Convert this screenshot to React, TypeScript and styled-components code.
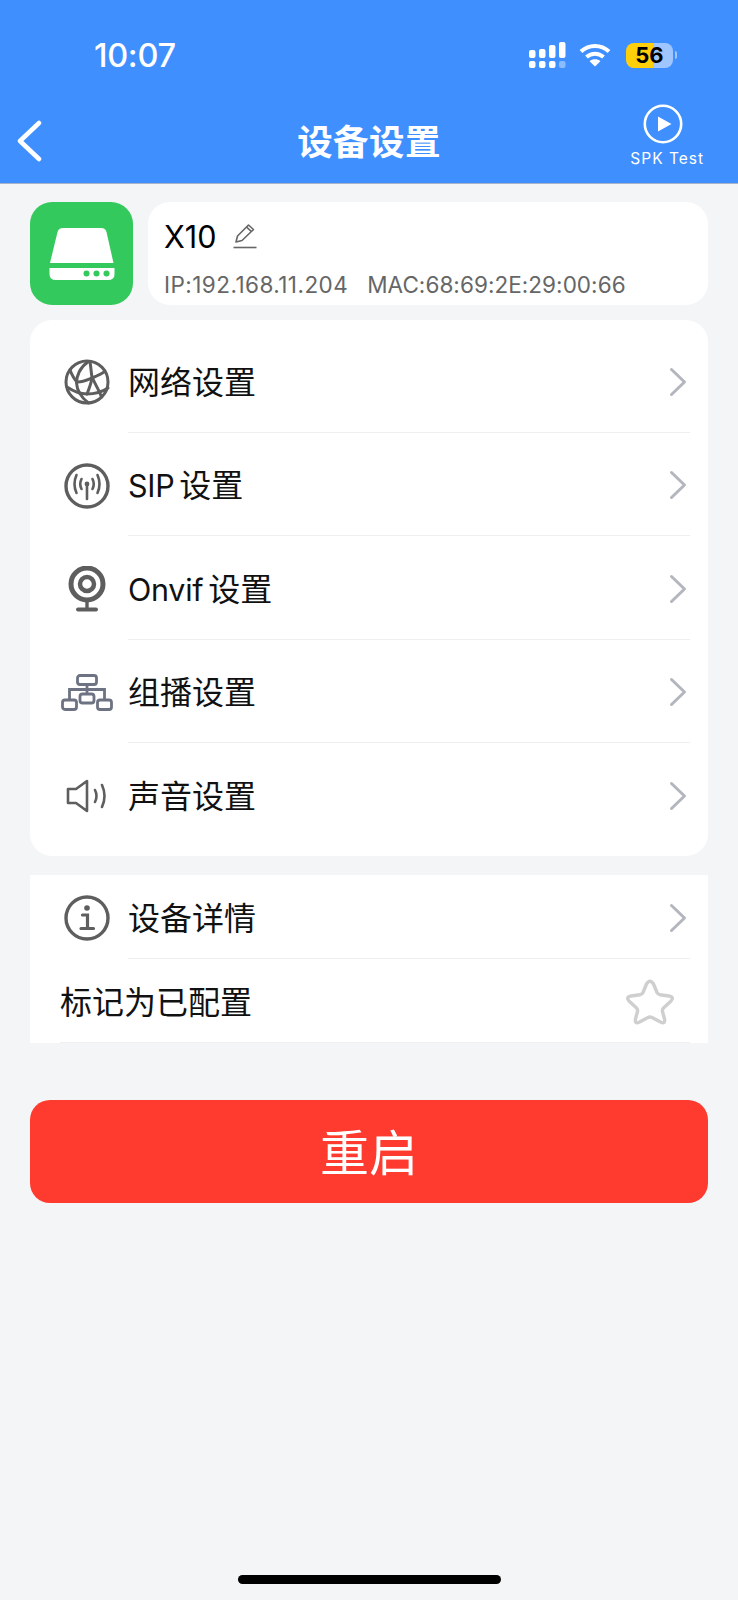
import styled, { createGlobalStyle } from 'styled-components';

const GlobalStyle = createGlobalStyle`
  html, body {
    margin: 0;
    padding: 0;
    background: #f4f5f7;
  }

  body {
    font-family: Inter, "Noto Sans CJK SC", sans-serif;
    color: #111;
  }
`;

const Page = styled.div`
  position: relative;
  width: 738px;
  height: 1600px;
  overflow: hidden;
  background: #f4f5f7;
`;

const Header = styled.header`
  background: #3f8fff;
  border-bottom: 1px solid #a9b4c6;
  color: #fff;
`;

const StatusBar = styled.div`
  display: flex;
  align-items: center;
  justify-content: space-between;
  height: 103px;
  padding: 7px 61px 0 94px;
  box-sizing: border-box;
`;

const Time = styled.span`
  font-size: 32.5px;
  font-weight: 500;
  letter-spacing: -0.3px;
`;

const StatusIcons = styled.div`
  display: flex;
  align-items: center;
  gap: 13px;
`;

const Battery = styled.div`
  display: flex;
  align-items: center;
  justify-content: center;
  width: 47px;
  height: 25px;
  margin-left: 2px;
  border-radius: 8px;
  background: linear-gradient(90deg, #ffd00a 57%, #a0c6ff 57%);
  color: #000;
  font-size: 22px;
  font-weight: 700;
`;

const BatteryNub = styled.i`
  display: block;
  width: 2px;
  height: 8px;
  margin-left: -11px;
  border-radius: 0 2px 2px 0;
  background: #a0c6ff;
`;

const NavBar = styled.div`
  display: grid;
  grid-template-columns: 1fr auto 1fr;
  height: 80px;
  padding: 0 16px;
`;

const BackButton = styled.div`
  display: flex;
  align-items: center;
  padding-bottom: 4px;
`;

const Title = styled.h1`
  margin: 0;
  align-self: center;
  padding: 0 0 7px;
  font-size: 35.5px;
  font-weight: 700;
  letter-spacing: 0.4px;
`;

const TestAction = styled.div`
  display: flex;
  flex-direction: column;
  align-items: center;
  justify-self: end;
  gap: 6px;
  margin-right: 18px;
  padding-top: 1px;
  font-size: 15.5px;
  letter-spacing: 1px;
  line-height: 18px;

  svg {
    margin-right: 8px;
  }
`;

const Content = styled.main`
  display: flex;
  flex-direction: column;
  padding: 18px 30px 0;
`;

const DeviceRow = styled.section`
  display: flex;
  gap: 15px;
  height: 103px;
`;

const DeviceBadge = styled.div`
  display: flex;
  flex: 0 0 103px;
  border-radius: 22px;
  background: #34c95c;
`;

const DeviceCard = styled.div`
  flex: 1;
  display: flex;
  flex-direction: column;
  padding: 16px 16px 0;
  border-radius: 22px;
  background: #fff;
`;

const DeviceName = styled.div`
  display: flex;
  align-items: center;
  gap: 17px;
  height: 36px;
  font-size: 30.5px;
  color: #000;
`;

const DeviceMeta = styled.div`
  display: flex;
  gap: 19px;
  margin-top: 17px;
  font-size: 22.5px;
  line-height: 28px;
  color: #666;
`;

const MetaItem = styled.span<{ $tracking?: number }>`
  letter-spacing: ${(p) => p.$tracking ?? 0}px;
`;

const Card = styled.section<{ $flat?: boolean }>`
  background: #fff;
  border-radius: ${(p) => (p.$flat ? '0' : '22px')};
  padding: ${(p) => (p.$flat ? '0' : '9px 0 9px')};
  margin-top: ${(p) => (p.$flat ? '19px' : '15px')};
`;

const Row = styled.div<{ $height: number }>`
  display: flex;
  height: ${(p) => p.$height}px;
`;

const IconSlot = styled.div`
  display: flex;
  flex: 0 0 98px;
  align-items: center;
  justify-content: center;
  padding: 3px 0 0 16px;
  box-sizing: border-box;
`;

const RowBody = styled.div<{ $divider?: boolean; $full?: boolean }>`
  flex: 1;
  display: flex;
  align-items: center;
  justify-content: space-between;
  margin-right: 18px;
  margin-left: ${(p) => (p.$full ? '30px' : '0')};
  padding: 3px 3px 0 0;
  border-bottom: 1px solid ${(p) => (p.$divider ? '#efeff1' : 'transparent')};
`;

const Label = styled.span`
  margin-bottom: 4px;
  font-size: 32px;
  color: #111;
`;

const LatinPart = styled.span`
  margin-right: -4px;
  font-size: 30.5px;
  letter-spacing: -0.3px;
`;

const ChevronIcon = styled.svg`
  width: 18px;
  height: 30px;
`;

const StarIcon = styled.svg`
  width: 50px;
  height: 48px;
  margin-right: 12px;
`;

const RestartButton = styled.button`
  height: 103px;
  margin-top: 57px;
  padding-bottom: 5px;
  border: 0;
  border-radius: 20px;
  background: #ff3b30;
  color: #fff;
  font-family: inherit;
  font-size: 49px;
`;

const HomeIndicator = styled.div`
  position: absolute;
  left: 238px;
  bottom: 16px;
  width: 263px;
  height: 9px;
  border-radius: 5px;
  background: #000;
`;

const Chevron = () => (
  <ChevronIcon viewBox="0 0 18 30" fill="none" stroke="#b4b6be" strokeWidth="3" strokeLinecap="round" strokeLinejoin="round">
    <path d="M2.5 2.5 L15.5 15 L2.5 27.5" />
  </ChevronIcon>
);

const SignalIcon = () => (
  <svg width="37" height="26" viewBox="0 0 37 26" fill="#fff">
    <rect x="0" y="8" width="6.5" height="8" rx="2" />
    <rect x="10" y="7" width="6.5" height="9" rx="2" />
    <rect x="20" y="3" width="6.5" height="13" rx="2" />
    <rect x="30" y="0" width="6.5" height="16" rx="2" />
    <rect x="0" y="19" width="6.5" height="7" rx="2" />
    <rect x="10" y="19" width="6.5" height="7" rx="2" />
    <rect x="20" y="19" width="6.5" height="7" rx="2" />
    <rect x="30" y="19" width="6.5" height="7" rx="2" opacity="0.4" />
  </svg>
);

const WifiIcon = () => (
  <svg width="32" height="24" viewBox="0 0 32 24" fill="none" stroke="#fff" strokeWidth="4">
    <path d="M2 8.5 C10 1 22 1 30 8.5" />
    <path d="M7.5 14 C12.5 9.5 19.5 9.5 24.5 14" />
    <path d="M16 23.5 L10.6 18.2 C13.5 15.6 18.5 15.6 21.4 18.2 Z" fill="#fff" stroke="none" />
  </svg>
);

const BackIcon = () => (
  <svg width="26" height="42" viewBox="0 0 26 42" fill="none" stroke="#fff" strokeWidth="4.5" strokeLinecap="round" strokeLinejoin="round">
    <path d="M23 3 L4 21 L23 39" />
  </svg>
);

const PlayIcon = () => (
  <svg width="40" height="40" viewBox="0 0 40 40" fill="none">
    <circle cx="20" cy="20" r="18.2" stroke="#fff" strokeWidth="2.6" />
    <path d="M15 12.5 L28.5 20 L15 27.5 Z" fill="#fff" />
  </svg>
);

const DriveIcon = () => (
  <svg width="103" height="103" viewBox="0 0 103 103">
    <path d="M33 26 H71 Q75.5 26 76.5 30 L83.5 61 H20 L27.5 30 Q28.5 26 33 26 Z" fill="#fff" />
    <path d="M19.5 66 H84.5 V72 Q84.5 78 78 78 H26 Q19.5 78 19.5 72 Z" fill="#fff" />
    <circle cx="56.5" cy="71.5" r="3" fill="#34c95c" />
    <circle cx="66.5" cy="71.5" r="3" fill="#34c95c" />
    <circle cx="76.5" cy="71.5" r="3" fill="#34c95c" />
  </svg>
);

const PencilIcon = () => (
  <svg width="24" height="26" viewBox="0 0 24 26" fill="none" stroke="#666" strokeWidth="1.6" strokeLinejoin="round">
    <path d="M3 19 L4.5 13 L15.5 2 L20.5 6.5 L9 17.5 Z" />
    <path d="M13.5 4 L18.5 8.7" />
    <path d="M0.5 24.5 H23.5" />
  </svg>
);

const GlobeIcon = () => (
  <svg width="46" height="46" viewBox="0 0 46 46" fill="none" stroke="#5e5e5e" strokeWidth="3" strokeLinecap="round">
    <circle cx="23" cy="23" r="21" />
    <path d="M24 3 C16 8 12.5 17 12.5 24 C13 32 18 39 24.5 44" />
    <path d="M26 3 C27 8 27 13 28 18 C31 25 35 31 37.5 38" />
    <path d="M6 11 C8 16 10 20 13 23 C18 23.5 23 21 28 19 C33 17 38 15 41 12" />
    <path d="M3 28 C9 32 16 35 23 35 C30 35 38 33 44 29" />
    <path d="M28 19 C27 25 25 30 23 35" />
  </svg>
);

const SipIcon = () => (
  <svg width="46" height="46" viewBox="0 0 46 46" fill="none" stroke="#5e5e5e" strokeLinecap="round">
    <circle cx="23" cy="23" r="21" strokeWidth="3.4" />
    <path d="M23 22 V36" strokeWidth="2.6" />
    <circle cx="23" cy="21" r="2.4" fill="#5e5e5e" strokeWidth="0" />
    <path d="M17.5 16 Q15 21 17.5 26" strokeWidth="2.6" />
    <path d="M28.5 16 Q31 21 28.5 26" strokeWidth="2.6" />
    <path d="M12.5 12 Q8.5 21 12.5 30" strokeWidth="2.6" />
    <path d="M33.5 12 Q37.5 21 33.5 30" strokeWidth="2.6" />
  </svg>
);

const CameraIcon = () => (
  <svg width="38" height="46" viewBox="0 0 38 46" fill="none" stroke="#5e5e5e">
    <circle cx="19" cy="18" r="16" strokeWidth="5" />
    <circle cx="19" cy="18" r="7" strokeWidth="4.5" />
    <path d="M19 34 V43" strokeWidth="3.4" />
    <path d="M10 43.5 H28" strokeWidth="4" strokeLinecap="round" />
  </svg>
);

const TreeIcon = () => (
  <svg width="52" height="38" viewBox="0 0 52 38" fill="none" stroke="#6d7382" strokeWidth="2.8">
    <rect x="16.5" y="1.5" width="19" height="9" rx="2.5" />
    <rect x="19" y="20" width="14" height="9" rx="2.5" />
    <rect x="1.5" y="26" width="14" height="9.5" rx="2.5" />
    <rect x="36.5" y="26" width="14" height="9.5" rx="2.5" />
    <path d="M26 10.5 V20 M43.5 26 V15.5 H8.5 V26" />
  </svg>
);

const SpeakerIcon = () => (
  <svg width="42" height="34" viewBox="0 0 42 34" fill="none" stroke="#5e5e5e" strokeWidth="2.6" strokeLinecap="round" strokeLinejoin="round">
    <path d="M21 2 V32 L10 24 H2 V10 H10 Z" />
    <path d="M29 11 Q32 17 29 23" />
    <path d="M36 6 Q41 17 36 28" />
  </svg>
);

const InfoIcon = () => (
  <svg width="46" height="46" viewBox="0 0 46 46" fill="none" stroke="#5e5e5e">
    <circle cx="23" cy="23" r="21" strokeWidth="3.4" />
    <circle cx="23" cy="13" r="2.8" fill="#5e5e5e" stroke="none" />
    <path d="M18.5 20 H23.5 V33 M17 33.5 H29.5" strokeWidth="3.2" strokeLinecap="round" />
  </svg>
);

const Star = () => (
  <StarIcon viewBox="0 0 50 48" fill="none" stroke="#cfcfcf" strokeWidth="3.4" strokeLinejoin="round">
    <path d="M21.5 6 Q25 0.5 28.5 6 L32 14.5 Q33 16.5 35 16.8 L44 18 Q49.5 19 46 23 L38.5 30 Q37 31.5 37.5 33.5 L39.5 41 Q40.5 46.5 35.5 44 L27 39.5 Q25 38.5 23 39.5 L14.5 44 Q9.5 46.5 10.5 41 L12.5 33.5 Q13 31.5 11.5 30 L4 23 Q0.5 19 6 18 L15 16.8 Q17 16.5 18 14.5 Z" />
  </StarIcon>
);

const menuItems = [
  { key: 'network', label: <>网络设置</>, icon: <GlobeIcon /> },
  { key: 'sip', label: <><LatinPart>SIP</LatinPart> 设置</>, icon: <SipIcon /> },
  { key: 'onvif', label: <><LatinPart>Onvif</LatinPart> 设置</>, icon: <CameraIcon /> },
  { key: 'multicast', label: <>组播设置</>, icon: <TreeIcon /> },
  { key: 'sound', label: <>声音设置</>, icon: <SpeakerIcon /> },
];

const App = () => (
  <Page>
    <GlobalStyle />
    <Header>
      <StatusBar>
        <Time>10:07</Time>
        <StatusIcons>
          <SignalIcon />
          <WifiIcon />
          <Battery>56</Battery>
          <BatteryNub />
        </StatusIcons>
      </StatusBar>
      <NavBar>
        <BackButton>
          <BackIcon />
        </BackButton>
        <Title>设备设置</Title>
        <TestAction>
          <PlayIcon />
          SPK Test
        </TestAction>
      </NavBar>
    </Header>
    <Content>
      <DeviceRow>
        <DeviceBadge>
          <DriveIcon />
        </DeviceBadge>
        <DeviceCard>
          <DeviceName>
            X10
            <PencilIcon />
          </DeviceName>
          <DeviceMeta>
            <MetaItem $tracking={0.45}>IP:192.168.11.204</MetaItem>
            <MetaItem $tracking={0.05}>MAC:68:69:2E:29:00:66</MetaItem>
          </DeviceMeta>
        </DeviceCard>
      </DeviceRow>
      <Card>
        {menuItems.map((item, index) => (
          <Row key={item.key} $height={103.5}>
            <IconSlot>{item.icon}</IconSlot>
            <RowBody $divider={index < menuItems.length - 1}>
              <Label>{item.label}</Label>
              <Chevron />
            </RowBody>
          </Row>
        ))}
      </Card>
      <Card $flat>
        <Row $height={84}>
          <IconSlot>
            <InfoIcon />
          </IconSlot>
          <RowBody $divider>
            <Label>设备详情</Label>
            <Chevron />
          </RowBody>
        </Row>
        <Row $height={84}>
          <RowBody $full $divider>
            <Label>标记为已配置</Label>
            <Star />
          </RowBody>
        </Row>
      </Card>
      <RestartButton>重启</RestartButton>
    </Content>
    <HomeIndicator />
  </Page>
);

export default App;
